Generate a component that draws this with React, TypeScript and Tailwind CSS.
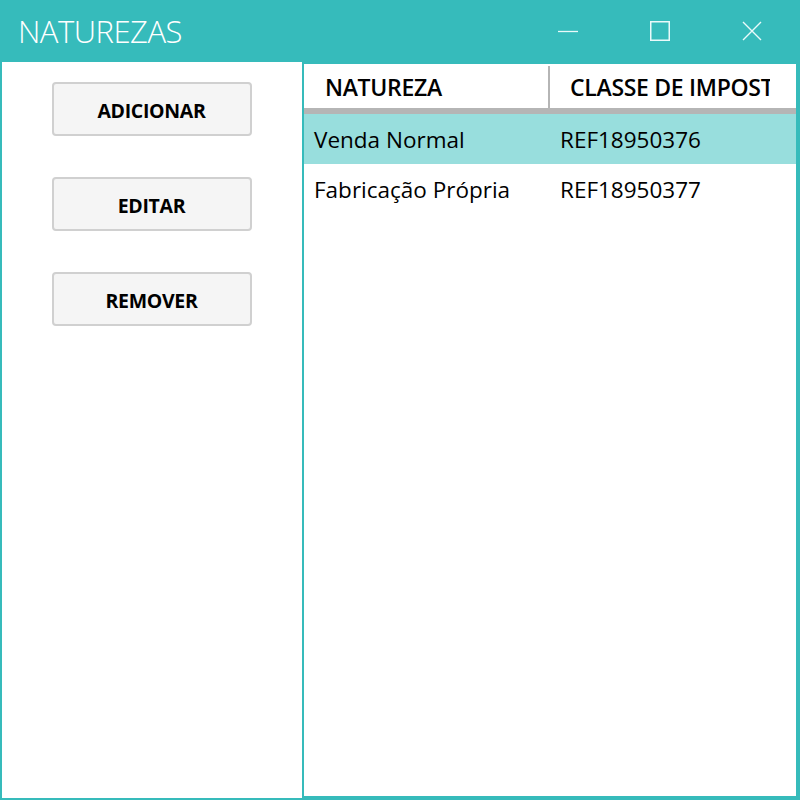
import React from "react";

const rows = [
  { natureza: "Venda Normal", classe: "REF18950376" },
  { natureza: "Fabricação Própria", classe: "REF18950377" },
];

export default function App() {
  return (
    <div className="flex h-[800px] w-[800px] flex-col bg-[#36bbbb] font-['Open_Sans','Noto_Sans',sans-serif] text-black">
      <div className="flex h-[62px] items-center">
        <h1 className="ml-[18px] text-[31px] font-light tracking-[-0.5px] text-white">NATUREZAS</h1>
        <div className="mr-[2px] ml-auto flex h-full items-center">
          <button className="flex h-full w-[92px] items-center justify-center">
            <svg width="20" height="20" viewBox="0 0 20 20"><path d="M0 10.5h20" stroke="#eafafa" strokeWidth="1.3" /></svg>
          </button>
          <button className="flex h-full w-[92px] items-center justify-center">
            <svg width="20" height="20" viewBox="0 0 20 20"><rect x="0.75" y="0.75" width="18.5" height="18.5" fill="none" stroke="#eafafa" strokeWidth="1.5" /></svg>
          </button>
          <button className="flex h-full w-[92px] items-center justify-center">
            <svg width="20" height="20" viewBox="0 0 20 20"><path d="M1 1L19 19M19 1L1 19" stroke="#eafafa" strokeWidth="1.4" /></svg>
          </button>
        </div>
      </div>
      <div className="flex flex-1 pl-[2px] pr-[4px]">
        <div className="mb-[2px] flex w-[300px] flex-col items-center gap-[41px] bg-white pt-[20px] pr-[1px]">
          {["ADICIONAR", "EDITAR", "REMOVER"].map((label) => (
            <button
              key={label}
              className="h-[54px] w-[200px] rounded-[4px] border-2 border-[#d0d0d0] bg-[#f5f5f5] pt-[3px] text-[19.5px] font-bold tracking-[-0.3px]"
            >
              {label}
            </button>
          ))}
        </div>
        <div className="mt-[2px] mb-[4px] ml-[2px] flex flex-1 flex-col overflow-hidden bg-white">
          <div className="flex h-[50px] border-b-[6px] border-[#b5b5b5] pt-[2px]">
            <div className="flex w-[246px] items-center border-r-2 border-[#b5b5b5] pl-[21px] text-[23px] font-semibold tracking-[-0.3px]">NATUREZA</div>
            <div className="flex w-[220px] items-center overflow-hidden whitespace-nowrap pl-[20px] text-[23px] font-semibold tracking-[-0.3px]">CLASSE DE IMPOSTO</div>
          </div>
          {rows.map((row, index) => (
            <div key={row.classe} className={`flex h-[50px] items-center pt-[2px] text-[22.5px] ${index === 0 ? "bg-[#98dedd]" : ""}`}>
              <div className="w-[256px] pl-[10px]">{row.natureza}</div>
              <div>{row.classe}</div>
            </div>
          ))}
        </div>
      </div>
    </div>
  );
}
